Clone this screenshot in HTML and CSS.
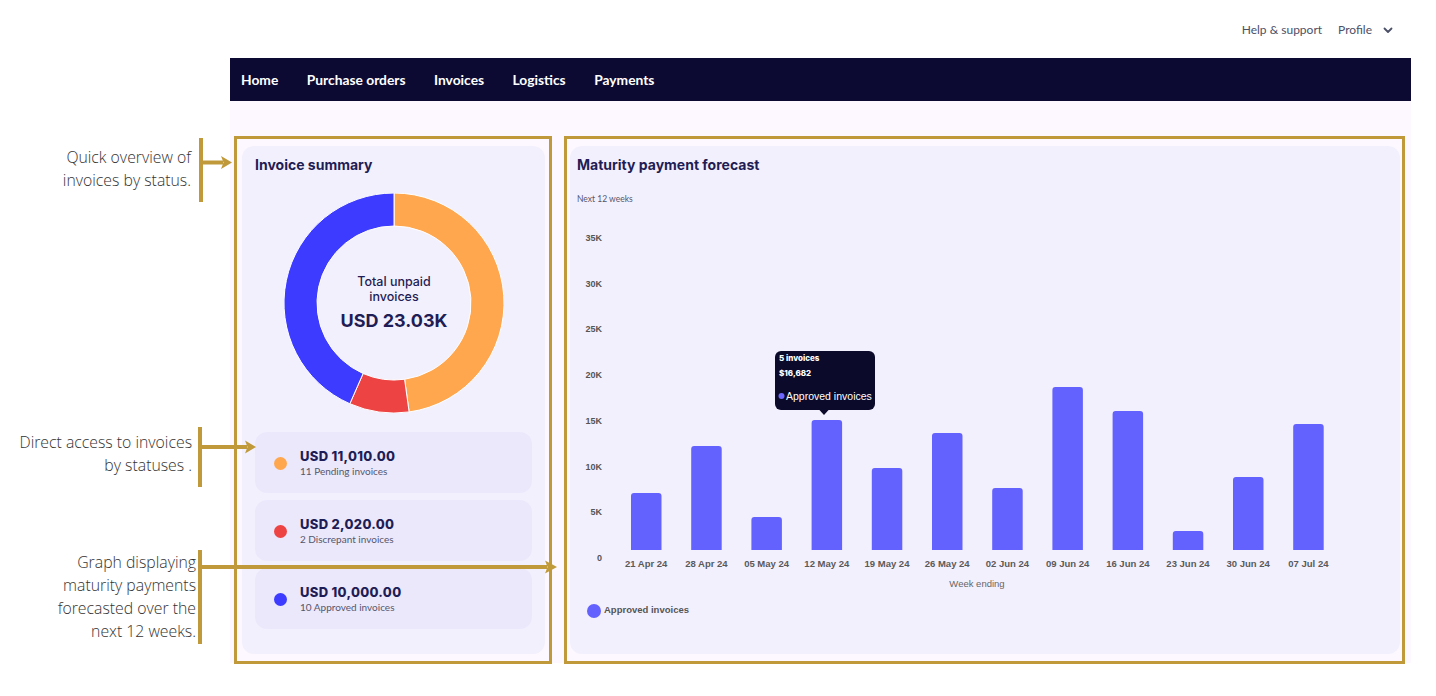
FILE: index.html
```html
<!DOCTYPE html>
<html lang="en">
<head>
<meta charset="utf-8">
<title>Invoices dashboard</title>
<link rel="stylesheet" href="styles.css">
</head>
<body>
<header class="topbar">
  <a class="top-link">Help &amp; support</a>
  <a class="top-link profile">Profile
    <svg class="chev" width="10" height="7" viewBox="0 0 10 7"><path d="M1.5 1.5 L5 5 L8.5 1.5" fill="none" stroke="#4b5066" stroke-width="1.8" stroke-linecap="round" stroke-linejoin="round"/></svg>
  </a>
</header>

<div class="app">
  <nav class="nav">
    <a class="nav-item">Home</a>
    <a class="nav-item">Purchase orders</a>
    <a class="nav-item">Invoices</a>
    <a class="nav-item">Logistics</a>
    <a class="nav-item">Payments</a>
  </nav>

  <main class="content">
    <section class="card summary">
      <h2 class="card-title">Invoice summary</h2>
      <div class="donut">
        <svg width="220" height="220" viewBox="0 0 220 220">
          <path d="M110 0 A110 110 0 0 1 125.11 218.96 L120.58 186.27 A77 77 0 0 0 110 33 Z" fill="#ffa74f" stroke="#fff" stroke-width="1"/>
          <path d="M125.11 218.96 A110 110 0 0 1 65.82 210.74 L79.08 180.52 A77 77 0 0 0 120.58 186.27 Z" fill="#ee4343" stroke="#fff" stroke-width="1"/>
          <path d="M65.82 210.74 A110 110 0 0 1 110 0 L110 33 A77 77 0 0 0 79.08 180.52 Z" fill="#3c3bff" stroke="#fff" stroke-width="1"/>
          <text x="110" y="93" class="donut-label" text-anchor="middle">Total unpaid</text>
          <text x="110" y="108" class="donut-label" text-anchor="middle">invoices</text>
          <text x="110" y="134" class="donut-total" text-anchor="middle">USD 23.03K</text>
        </svg>
      </div>
      <ul class="status-list">
        <li class="status">
          <span class="dot dot-pending"></span>
          <div class="status-text">
            <div class="amount">USD 11,010.00</div>
            <div class="count">11 Pending invoices</div>
          </div>
        </li>
        <li class="status">
          <span class="dot dot-discrepant"></span>
          <div class="status-text">
            <div class="amount">USD 2,020.00</div>
            <div class="count">2 Discrepant invoices</div>
          </div>
        </li>
        <li class="status">
          <span class="dot dot-approved"></span>
          <div class="status-text">
            <div class="amount">USD 10,000.00</div>
            <div class="count">10 Approved invoices</div>
          </div>
        </li>
      </ul>
    </section>

    <section class="card forecast">
      <h2 class="card-title">Maturity payment forecast</h2>
      <div class="subtitle">Next 12 weeks</div>
      <svg class="chart" width="830" height="405" viewBox="0 0 830 405">
        <g class="ylabels" text-anchor="end">
          <text x="32" y="21">35K</text>
          <text x="32" y="66.7">30K</text>
          <text x="32" y="112.4">25K</text>
          <text x="32" y="158">20K</text>
          <text x="32" y="203.9">15K</text>
          <text x="32" y="249.6">10K</text>
          <text x="32" y="295.3">5K</text>
          <text x="32" y="341">0</text>
        </g>
        <g fill="#6462fe">
          <path d="M61 330 V276 a3 3 0 0 1 3 -3 H88.5 a3 3 0 0 1 3 3 V330 Z"/>
          <path d="M121.2 330 V229 a3 3 0 0 1 3 -3 H148.7 a3 3 0 0 1 3 3 V330 Z"/>
          <path d="M181.4 330 V300 a3 3 0 0 1 3 -3 H208.9 a3 3 0 0 1 3 3 V330 Z"/>
          <path d="M241.6 330 V203 a3 3 0 0 1 3 -3 H269.1 a3 3 0 0 1 3 3 V330 Z"/>
          <path d="M301.8 330 V251 a3 3 0 0 1 3 -3 H329.3 a3 3 0 0 1 3 3 V330 Z"/>
          <path d="M362 330 V216 a3 3 0 0 1 3 -3 H389.5 a3 3 0 0 1 3 3 V330 Z"/>
          <path d="M422.2 330 V271 a3 3 0 0 1 3 -3 H449.7 a3 3 0 0 1 3 3 V330 Z"/>
          <path d="M482.4 330 V170 a3 3 0 0 1 3 -3 H509.9 a3 3 0 0 1 3 3 V330 Z"/>
          <path d="M542.6 330 V194 a3 3 0 0 1 3 -3 H570.1 a3 3 0 0 1 3 3 V330 Z"/>
          <path d="M602.8 330 V314 a3 3 0 0 1 3 -3 H630.3 a3 3 0 0 1 3 3 V330 Z"/>
          <path d="M663 330 V260 a3 3 0 0 1 3 -3 H690.5 a3 3 0 0 1 3 3 V330 Z"/>
          <path d="M723.2 330 V207 a3 3 0 0 1 3 -3 H750.7 a3 3 0 0 1 3 3 V330 Z"/>
        </g>
        <g class="xlabels" text-anchor="middle">
          <text x="76.2" y="347">21 Apr 24</text>
          <text x="136.4" y="347">28 Apr 24</text>
          <text x="196.6" y="347">05 May 24</text>
          <text x="256.8" y="347">12 May 24</text>
          <text x="317" y="347">19 May 24</text>
          <text x="377.2" y="347">26 May 24</text>
          <text x="437.4" y="347">02 Jun 24</text>
          <text x="497.6" y="347">09 Jun 24</text>
          <text x="557.8" y="347">16 Jun 24</text>
          <text x="618" y="347">23 Jun 24</text>
          <text x="678.2" y="347">30 Jun 24</text>
          <text x="738.4" y="347">07 Jul 24</text>
        </g>
        <text class="axis-title" x="407" y="367" text-anchor="middle">Week ending</text>
        <circle cx="24" cy="391" r="7" fill="#6462fe"/>
        <text class="legend" x="34" y="393">Approved invoices</text>

        <g class="tooltip">
          <rect x="205" y="131" width="100" height="59" rx="6" fill="#0b0a2a"/>
          <path d="M249 189.5 L254 195 L259 189.5 Z" fill="#0b0a2a"/>
          <text class="tt-strong" x="209" y="141">5 invoices</text>
          <text class="tt-strong" x="209" y="156">$16,682</text>
          <circle cx="211.5" cy="176" r="3" fill="#6d67ff"/>
          <text class="tt-text" x="216" y="179.5">Approved invoices</text>
        </g>
      </svg>
    </section>
  </main>
</div>

<div class="annotations">
  <svg class="ann-lines" width="1436" height="696" viewBox="0 0 1436 696">
    <g fill="none" stroke="#c09a3a" stroke-width="3">
      <rect x="235.5" y="137.5" width="315" height="525"/>
      <rect x="565.5" y="137.5" width="838" height="525"/>
    </g>
    <g fill="#c09a3a">
      <rect x="199" y="138" width="4" height="64"/>
      <rect x="203" y="160.5" width="20" height="4"/>
      <path d="M221 156 L232 162.5 L221 169 L223.5 162.5 Z"/>

      <rect x="198" y="427" width="4" height="60"/>
      <rect x="202" y="445" width="45" height="4"/>
      <path d="M245 440.5 L256 447 L245 453.5 L247.5 447 Z"/>

      <rect x="198" y="550" width="4" height="94"/>
      <rect x="202" y="565" width="345" height="4"/>
      <path d="M545 560.5 L557 567 L545 573.5 L547.5 567 Z"/>
    </g>
  </svg>
  <div class="ann-text ann-1">Quick overview of<br>invoices by status.</div>
  <div class="ann-text ann-2">Direct access to invoices<br>by statuses .</div>
  <div class="ann-text ann-3">Graph displaying<br>maturity payments<br>forecasted over the<br>next 12 weeks.</div>
</div>
</body>
</html>
```

FILE: styles.css
```css
* { box-sizing: border-box; }
html, body { margin: 0; padding: 0; }
body {
  width: 1436px;
  height: 696px;
  background: #ffffff;
  position: relative;
  overflow: hidden;
  font-family: "Lato", "Liberation Sans", sans-serif;
}

.topbar {
  height: 58px;
  display: flex;
  justify-content: flex-end;
  align-items: flex-start;
  gap: 16px;
  padding: 22px 43px 0 0;
}
.top-link {
  font-family: "Lato", sans-serif;
  font-size: 12px;
  line-height: 16px;
  color: #4b5066;
  display: flex;
  align-items: center;
}
.profile .chev { margin-left: 11px; }

.app {
  margin-left: 230px;
  width: 1181px;
}

.nav {
  height: 43px;
  background: #0c0a33;
  display: flex;
  align-items: center;
  gap: 28.5px;
  padding-left: 11px;
}
.nav-item {
  color: #ffffff;
  font-family: "Lato", sans-serif;
  font-weight: 700;
  font-size: 13.8px;
  line-height: 16px;
  padding-top: 1px;
}

.content {
  background: #fdf8ff;
  display: flex;
  gap: 25px;
  padding: 45px 11px 9px 12px;
}

.card {
  background: #f3f0fd;
  border-radius: 12px;
  height: 508px;
}
.summary {
  width: 303px;
  padding: 11px 13px 0 13px;
}
.forecast {
  flex: 1;
  padding: 11px 0 0 7px;
}
.card-title {
  margin: 0;
  font-family: "Inter", sans-serif;
  font-weight: 700;
  font-size: 14px;
  line-height: 16px;
  color: #1f1d55;
  letter-spacing: 0;
}

.donut {
  display: flex;
  justify-content: center;
  margin-top: 20px;
  height: 220px;
}
.donut svg { display: block; }
.donut-label {
  font-family: "Inter", sans-serif;
  font-weight: 500;
  font-size: 12.5px;
  fill: #1f1d55;
}
.donut-total {
  font-family: "Inter", sans-serif;
  font-weight: 700;
  font-size: 18px;
  fill: #1f1d55;
}

.status-list {
  list-style: none;
  margin: 19px 0 0 0;
  padding: 0;
  display: flex;
  flex-direction: column;
  gap: 7px;
}
.status {
  height: 61px;
  background: #ebe8fc;
  border-radius: 12px;
  display: flex;
  align-items: center;
  padding-left: 19px;
  gap: 13px;
}
.dot {
  width: 13px;
  height: 13px;
  border-radius: 50%;
  flex: none;
  margin-top: 1px;
}
.dot-pending { background: #ffa74f; }
.dot-discrepant { background: #ee4343; }
.dot-approved { background: #3c3bff; }
.amount {
  font-family: "Inter", sans-serif;
  font-weight: 800;
  font-size: 13px;
  line-height: 16px;
  letter-spacing: 0.3px;
  color: #1f1d55;
}
.count {
  font-family: "Lato", sans-serif;
  font-size: 10px;
  line-height: 13px;
  color: #55566b;
  margin-top: 1px;
}

.subtitle {
  margin-top: 21px;
  font-family: "Lato", sans-serif;
  font-size: 8.5px;
  line-height: 10px;
  color: #55566b;
}
.chart {
  display: block;
  margin-top: 16px;
  margin-left: -7px;
}
.ylabels text {
  font-family: "Liberation Sans", sans-serif;
  font-weight: 700;
  font-size: 9px;
  fill: #555;
}
.xlabels text {
  font-family: "Liberation Sans", sans-serif;
  font-weight: 700;
  font-size: 9.5px;
  fill: #5a5a5a;
}
.axis-title {
  font-family: "Liberation Sans", sans-serif;
  font-size: 9.5px;
  fill: #666;
}
.legend {
  font-family: "Liberation Sans", sans-serif;
  font-weight: 700;
  font-size: 9.5px;
  fill: #555;
}
.tt-strong {
  font-family: "Inter", sans-serif;
  font-weight: 800;
  font-size: 8px;
  fill: #ffffff;
}
.tt-text {
  font-family: "Liberation Sans", sans-serif;
  font-size: 10.5px;
  fill: #ffffff;
}

.annotations {
  position: absolute;
  left: 0;
  top: 0;
  width: 1436px;
  height: 696px;
  pointer-events: none;
}
.ann-lines { position: absolute; left: 0; top: 0; }
.ann-text {
  position: absolute;
  text-align: right;
  font-family: "Open Sans", sans-serif;
  font-weight: 300;
  font-size: 15.8px;
  line-height: 23px;
  color: #333333;
  white-space: nowrap;
}
.ann-1 { right: 1245px; top: 146px; }
.ann-2 { right: 1244px; top: 431px; }
.ann-3 { right: 1240px; top: 551px; }
```
